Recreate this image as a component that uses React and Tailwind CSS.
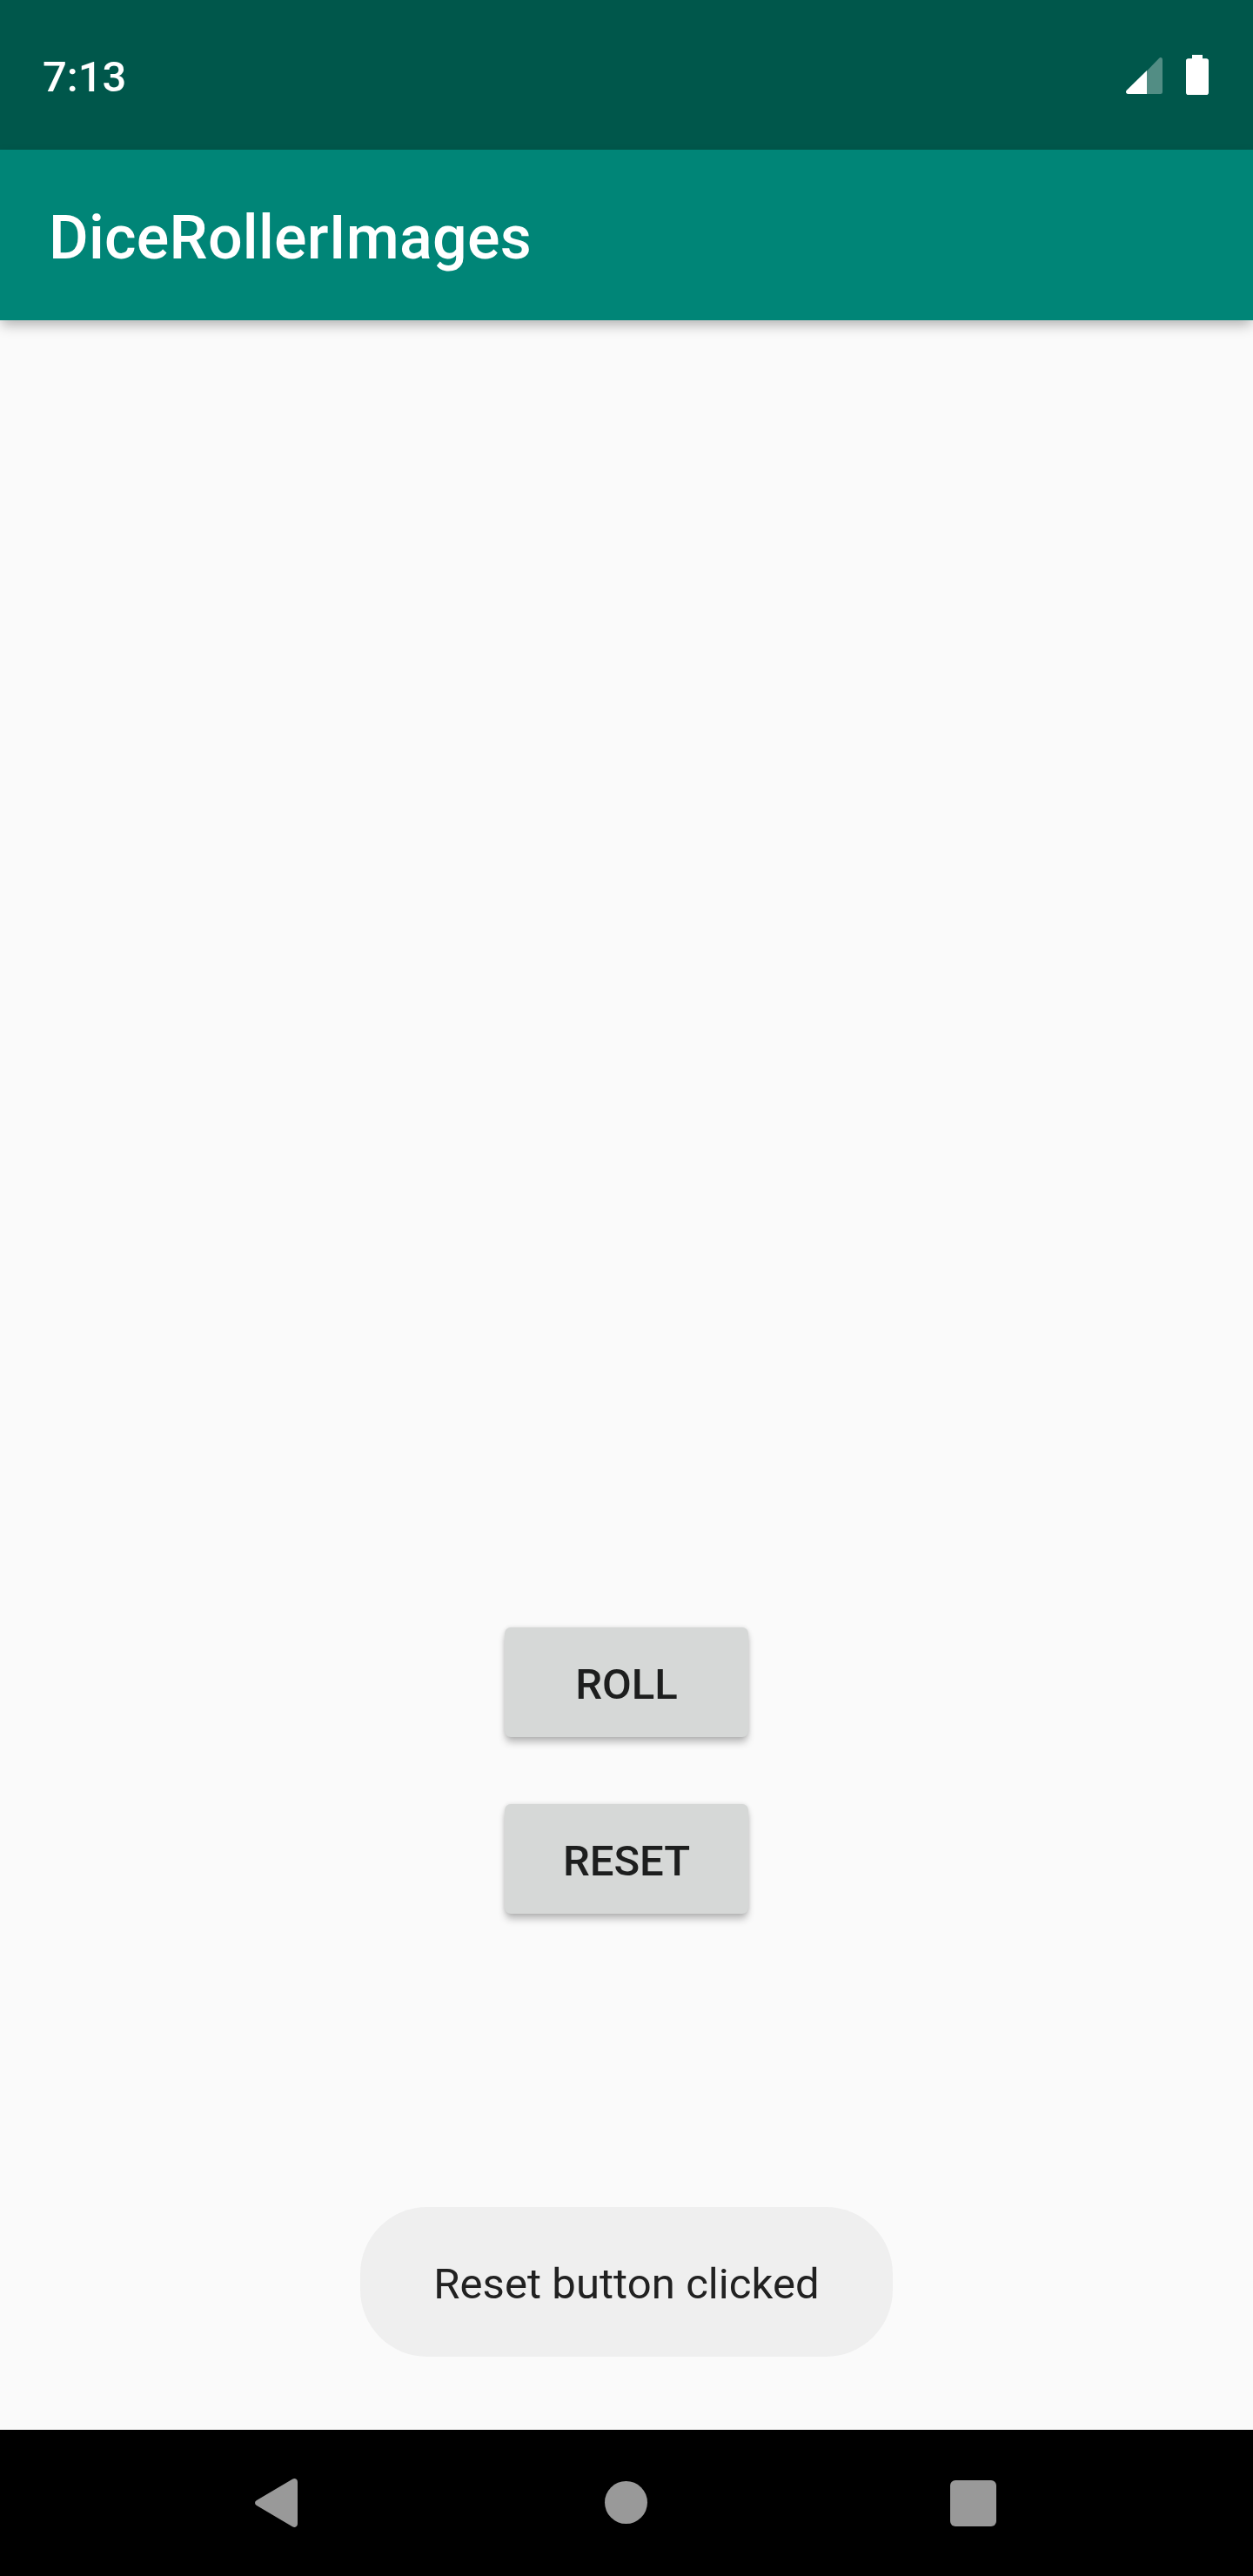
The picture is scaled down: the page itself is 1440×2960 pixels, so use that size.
function SignalIcon() {
  return (
    <svg width="42" height="42" viewBox="0 0 42 42">
      <path d="M24 15.5L38 .9Q39.8-.5 41.2 .5Q42 1 42 3V39.5Q42 42 39.5 42H24Z" fill="#fff" fillOpacity=".32" />
      <path d="M24 15V42H2.6Q0 42 0 39.6Q0 38.6 1 37.6Z" fill="#fff" />
    </svg>
  );
}

function BatteryIcon() {
  return (
    <svg width="26" height="46" viewBox="0 0 26 46">
      <path d="M7 0H19V4.3H23.2Q26 4.3 26 7.1V43.2Q26 46 23.2 46H2.8Q0 46 0 43.2V7.1Q0 4.3 2.8 4.3H7Z" fill="#fff" />
    </svg>
  );
}

function ActionButton({ children }) {
  return (
    <button className="h-[126px] w-[280px] rounded-[7px] bg-[#d6d8d7] pt-[5px] text-[49px] leading-[57px] font-medium text-[#1d1e1e] shadow-[0_7px_8px_-1px_rgba(0,0,0,0.25),0_0_5px_rgba(0,0,0,0.12)]">
      {children}
    </button>
  );
}

export default function App() {
  return (
    <div className="flex h-[2960px] w-[1440px] flex-col bg-[#fafafa] font-['Roboto',sans-serif]">
      <div className="flex h-[172px] shrink-0 items-center justify-between bg-[#00574b] pr-[51px] pl-[49px] text-white">
        <span className="pt-[5px] text-[49px] leading-[57px] font-medium">7:13</span>
        <div className="flex items-center gap-[27px]">
          <div className="pt-[2px]"><SignalIcon /></div>
          <BatteryIcon />
        </div>
      </div>
      <header className="z-10 flex h-[196px] shrink-0 items-center bg-[#008577] pl-[56px] shadow-[0_7px_14px_-2px_rgba(0,0,0,0.3)]">
        <h1 className="pt-[6px] text-[70px] leading-[82px] font-medium tracking-[0.25px] text-white">DiceRollerImages</h1>
      </header>
      <main className="flex flex-1 flex-col items-center pt-[1502px]">
        <ActionButton>ROLL</ActionButton>
        <div className="mt-[77px] flex">
          <ActionButton>RESET</ActionButton>
        </div>
        <div className="mt-[337px] flex h-[172px] w-[612px] items-center justify-center rounded-[77px] bg-[#efefef] pt-[5px] text-[49px] leading-[57px] tracking-[0.08px] text-[#212121]">
          Reset button clicked
        </div>
      </main>
      <nav className="flex h-[168px] shrink-0 items-center bg-black pl-[293px]">
        <svg width="49" height="56" viewBox="0 0 49 56">
          <path d="M43 .8Q45.5-.7 47.6 .8Q49 1.9 49 4V52Q49 54.3 47.4 55.3Q45.4 56.6 43 55.2L2 31Q0 29.8 0 28Q0 26.2 2 25Z" fill="#999" />
        </svg>
        <div className="mb-px ml-[353px] size-[49px] rounded-full bg-[#999]" />
        <div className="ml-[347.5px] size-[53px] rounded-[6px] bg-[#999]" />
      </nav>
    </div>
  );
}
